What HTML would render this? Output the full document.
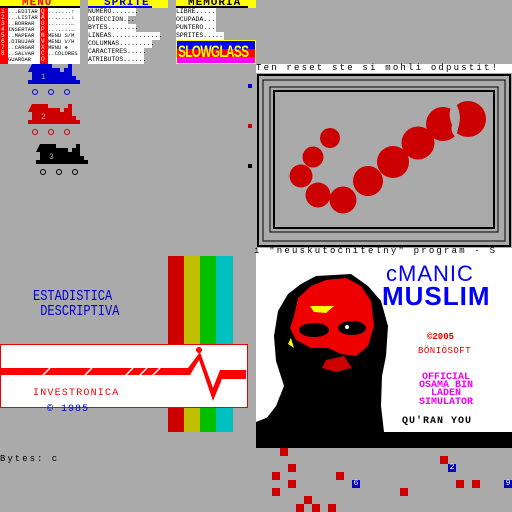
<!DOCTYPE html>
<html><head><style>
*{margin:0;padding:0;box-sizing:border-box}
body{width:512px;height:512px;background:#aaa;position:relative;overflow:hidden;font-family:"Liberation Mono",monospace}
.a{position:absolute}
.t{position:absolute;font-size:8px;line-height:8px;white-space:pre;color:#000}
.sq{position:absolute;width:8px;height:8px;background:#c00}
.bq{position:absolute;width:8px;height:8px;background:#00c;color:#fff;font-size:8px;line-height:8px;text-align:center;font-family:"Liberation Mono",monospace}
</style></head><body>
<!-- MENU -->
<div class="a" style="left:0;top:0;width:80px;height:8px;background:#ff0"></div>
<div class="t" style="left:22px;top:-1px;color:#f00;font-size:11px;font-weight:bold;letter-spacing:1px">MENU</div>
<div class="a" style="left:0;top:6px;width:80px;height:2px;background:#000"></div>
<div class="a" style="left:0;top:8px;width:8px;height:56px;background:#f00"></div>
<div class="a" style="left:8px;top:8px;width:72px;height:56px;background:#fff"></div>
<div class="a" style="left:40px;top:8px;width:8px;height:56px;background:#f00"></div>
<div class="t" style="left:1px;top:9px;color:#fff;font-size:6px;line-height:6px">1<br>2<br>3<br>4<br>5<br>6<br>7<br>8<br> </div>
<div class="t" style="left:41px;top:9px;color:#fff;font-size:6px;line-height:6px">Q<br>A<br>O<br>P<br>N<br>V<br>X<br>C<br>O</div>
<div class="t" style="left:8px;top:9px;font-size:5.5px;line-height:6px">...EDITAR<br>...LISTAR<br>..BORRAR<br>INSERTAR<br>..MAPEAR<br>.DIBUJAR<br>..CARGAR<br>..SALVAR<br>GUARDAR</div>
<div class="t" style="left:48px;top:9px;font-size:5.5px;line-height:6px">.......↑<br>.......↓<br>.......←<br>.......→<br>MENU S/M<br>MENU V/H<br>MENU ✥<br>..COLORES</div>
<!-- SPRITE -->
<div class="a" style="left:88px;top:0;width:80px;height:8px;background:#ff0"></div>
<div class="t" style="left:104px;top:-1px;color:#00f;font-size:11px;font-weight:bold;letter-spacing:1px">SPRITE</div>
<div class="a" style="left:88px;top:6px;width:64px;height:2px;background:#00f"></div>
<div class="a" style="left:88px;top:8px;width:48px;height:8px;background:#fff"></div>
<div class="a" style="left:88px;top:16px;width:40px;height:8px;background:#fff"></div>
<div class="a" style="left:88px;top:24px;width:48px;height:8px;background:#fff"></div>
<div class="a" style="left:88px;top:32px;width:72px;height:8px;background:#fff"></div>
<div class="a" style="left:88px;top:40px;width:64px;height:8px;background:#fff"></div>
<div class="a" style="left:88px;top:48px;width:56px;height:8px;background:#fff"></div>
<div class="a" style="left:88px;top:56px;width:56px;height:8px;background:#fff"></div>
<div class="t" style="left:88px;top:8px;font-size:6.5px">NUMERO.......<br>DIRECCION...<br>BYTES........<br>LINEAS.............<br>COLUMNAS.........<br>CARACTERES.....<br>ATRIBUTOS......</div>
<!-- MEMORIA -->
<div class="a" style="left:176px;top:0;width:80px;height:8px;background:#ff0"></div>
<div class="t" style="left:188px;top:-1px;color:#000;font-size:11px;font-weight:bold;letter-spacing:1px">MEMORIA</div>
<div class="a" style="left:176px;top:6px;width:72px;height:2px;background:#000"></div>
<div class="a" style="left:176px;top:8px;width:40px;height:8px;background:#fff"></div>
<div class="a" style="left:176px;top:16px;width:40px;height:8px;background:#fff"></div>
<div class="a" style="left:176px;top:24px;width:40px;height:8px;background:#fff"></div>
<div class="a" style="left:176px;top:32px;width:48px;height:8px;background:#fff"></div>
<div class="t" style="left:176px;top:8px;font-size:6.5px">LIBRE.....<br>OCUPADA...<br>PUNTERO...<br>SPRITES.....</div>
<div class="a" style="left:176px;top:40px;width:80px;height:24px;background:linear-gradient(#00f 0 8px,#f00 8px 16px,#f0f 16px);border:1px solid #ff0"></div>
<div class="t" style="left:178px;top:40px;color:#ff0;font-size:17px;line-height:24px;font-weight:bold;letter-spacing:-1px;font-family:'Liberation Sans',sans-serif;transform:scaleX(.7);transform-origin:left">SLOWGLASS</div>
<!-- trains -->
<svg class="a" style="left:0;top:60px" width="256" height="120">
<g fill="#00c"><path d="M32 4h20v4h8v4h4v-4h4v-4h4v12h4v4h4v4h-52v-4h4v-8h-4z"/></g>
<g fill="none" stroke="#00c" stroke-width="1"><circle cx="35" cy="32" r="2.5"/><circle cx="51" cy="32" r="2.5"/><circle cx="67" cy="32" r="2.5"/></g>
<text x="41" y="19" fill="#aaa" font-size="8" font-family="Liberation Mono">1</text>
<g fill="#c00"><path d="M32 44h16v4h12v4h4v-4h4v-4h4v12h4v4h4v4h-52v-4h4v-8h-4z"/></g>
<g fill="none" stroke="#c00"><circle cx="35" cy="72" r="2.5"/><circle cx="51" cy="72" r="2.5"/><circle cx="67" cy="72" r="2.5"/></g>
<text x="41" y="59" fill="#aaa" font-size="8" font-family="Liberation Mono">2</text>
<g fill="#000"><path d="M40 84h16v4h12v4h4v-4h4v-4h4v12h4v4h4v4h-52v-4h4v-8h-4z"/></g>
<g fill="none" stroke="#000"><circle cx="43" cy="112" r="2.5"/><circle cx="59" cy="112" r="2.5"/><circle cx="75" cy="112" r="2.5"/></g>
<text x="49" y="99" fill="#aaa" font-size="8" font-family="Liberation Mono">3</text>
<rect x="248" y="24" width="4" height="4" fill="#00c"/><rect x="248" y="64" width="4" height="4" fill="#c00"/><rect x="248" y="104" width="4" height="4" fill="#000"/>
</svg>
<!-- right top -->
<div class="a" style="left:256px;top:64px;width:256px;height:9px;background:#fff"></div>
<div class="t" style="left:256px;top:64px;font-size:9px;letter-spacing:2.2px">Ten reset ste si mohli odpustit!</div>
<svg class="a" style="left:256px;top:73px" width="256" height="175">
<rect x="0" y="0" width="256" height="175" fill="#aaa"/>
<rect x="2" y="2" width="252" height="171" fill="none" stroke="#000" stroke-width="2"/>
<rect x="7" y="7" width="242" height="161" fill="none" stroke="#000" stroke-width="1"/>
<rect x="14" y="14" width="228" height="145" fill="none" stroke="#000" stroke-width="1"/>
<rect x="18" y="18" width="220" height="137" fill="none" stroke="#000" stroke-width="2"/>
<g fill="#c00"><circle cx="74" cy="65" r="10"/><circle cx="57" cy="84" r="10.5"/><circle cx="45" cy="103" r="11.5"/><circle cx="62" cy="122" r="12.5"/><circle cx="87" cy="127" r="13.5"/><circle cx="112" cy="108" r="15"/><circle cx="137" cy="89" r="16"/><circle cx="162" cy="70" r="16.5"/><circle cx="187" cy="51" r="17"/><circle cx="212" cy="46" r="18"/></g>
<path d="M196 52 Q190 37 199 29 Q206 40 203 52 Q201 60 200 64 Q194 60 196 52Z" fill="#aaa"/>
</svg>
<div class="a" style="left:256px;top:248px;width:256px;height:8px;background:#fff"></div>
<div class="t" style="left:254px;top:247px;font-size:9px;letter-spacing:2.2px">í "neuskutočniteľný" program - S</div>
<!-- manic muslim -->
<div class="a" style="left:256px;top:256px;width:256px;height:176px;background:#fff"></div>
<svg class="a" style="left:256px;top:256px" width="256" height="192">
<path d="M0 166 L20 158 L28 130 L20 105 L18 80 L22 55 L32 38 L45 28 L60 20 L95 18 L112 30 L125 45 L132 70 L130 100 L126 120 L125 150 L128 176 L0 176Z" fill="#000"/>
<path d="M38 60 L42 42 L55 30 L70 24 L90 22 L105 30 L115 45 L118 70 L112 90 L100 100 L85 98 L72 92 L55 92 L40 84 L34 72Z" fill="#e00"/>
<path d="M54 50 L78 50 L70 57 L58 56Z" fill="#ff0"/>
<path d="M32 88 L35 82 L38 92Z" fill="#ff0"/>
<ellipse cx="58" cy="74" rx="15" ry="7" fill="#000"/><ellipse cx="96" cy="72" rx="14" ry="7" fill="#000"/>
<circle cx="91" cy="71" r="2" fill="#fff"/>
<path d="M40 100 L60 96 L90 108 L110 100 L125 110 L125 176 L0 176 L20 150Z" fill="#000"/>
<path d="M70 104 L88 100 L96 112 L80 116 L66 112Z" fill="#c00"/>
<rect x="0" y="176" width="256" height="16" fill="#000"/>
</svg>
<div class="t" style="left:386px;top:263px;color:#00f;font-size:22px;line-height:22px;font-family:'Liberation Sans',sans-serif;letter-spacing:1px">cMANIC</div>
<div class="t" style="left:382px;top:284px;color:#00f;font-size:26px;line-height:24px;font-weight:bold;font-family:'Liberation Sans',sans-serif;letter-spacing:1px">MUSLIM</div>
<div class="t" style="left:427px;top:333px;color:#e00;font-size:9px;font-weight:bold">©2005</div>
<div class="t" style="left:418px;top:347px;color:#e00;font-size:9px;letter-spacing:.5px">BÖNIÖSOFT</div>
<div class="t" style="left:412px;top:374px;color:#e0e;font-size:10px;line-height:8.2px;font-weight:bold;text-align:center;width:68px">OFFICIAL<br>OSAMA BIN<br>LADEN<br>SIMULATOR</div>
<div class="t" style="left:402px;top:418px;font-size:10px;font-weight:bold;letter-spacing:1px">QU'RAN YOU</div>
<div class="a" style="left:256px;top:432px;width:256px;height:16px;background:#000"></div>
<!-- left bottom -->
<div class="a" style="left:168px;top:256px;width:16px;height:176px;background:#c00"></div>
<div class="a" style="left:184px;top:256px;width:16px;height:176px;background:#c0c000"></div>
<div class="a" style="left:200px;top:256px;width:16px;height:176px;background:#00c000"></div>
<div class="a" style="left:216px;top:256px;width:17px;height:176px;background:#00c0c0"></div>
<div class="t" style="left:33px;top:289px;color:#00c;font-size:15px;line-height:15px;transform:scaleX(.8);transform-origin:left">ESTADISTICA<br> DESCRIPTIVA</div>
<div class="a" style="left:0;top:344px;width:248px;height:64px;background:#fff;border:1px solid #e00"></div>
<svg class="a" style="left:0;top:344px" width="248" height="64">
<path d="M1 31 H190 L199 16 L213 57 L222 35 H246 V26 H220 L213 44 L200 8 L188 24 H1Z" fill="#f00"/>
<circle cx="199" cy="6" r="3" fill="#f00"/>
<g stroke="#fff" stroke-width="1.5"><path d="M40 34 L50 24M82 34 L92 24M123 34 L133 24M137 34 L147 24M150 34 L160 24"/></g>
</svg>
<div class="t" style="left:33px;top:390px;color:#e00;font-size:10px;letter-spacing:1.2px">INVESTRONICA</div>
<div class="t" style="left:47px;top:406px;color:#00c;font-size:10px;letter-spacing:1px">© 1985</div>
<div class="t" style="left:0;top:455px;font-size:9px;letter-spacing:2px">Bytes: c</div>
<!-- squares -->
<div class="sq" style="left:280px;top:448px"></div><div class="sq" style="left:288px;top:464px"></div>
<div class="sq" style="left:272px;top:472px"></div><div class="sq" style="left:336px;top:472px"></div>
<div class="sq" style="left:288px;top:480px"></div><div class="sq" style="left:272px;top:488px"></div>
<div class="sq" style="left:304px;top:496px"></div><div class="sq" style="left:296px;top:504px"></div>
<div class="sq" style="left:312px;top:504px"></div><div class="sq" style="left:328px;top:504px"></div>
<div class="sq" style="left:440px;top:456px"></div><div class="sq" style="left:400px;top:488px"></div>
<div class="sq" style="left:456px;top:480px"></div><div class="sq" style="left:472px;top:480px"></div>
<div class="bq" style="left:448px;top:464px">2</div><div class="bq" style="left:352px;top:480px">6</div><div class="bq" style="left:504px;top:480px">9</div>
</body></html>
